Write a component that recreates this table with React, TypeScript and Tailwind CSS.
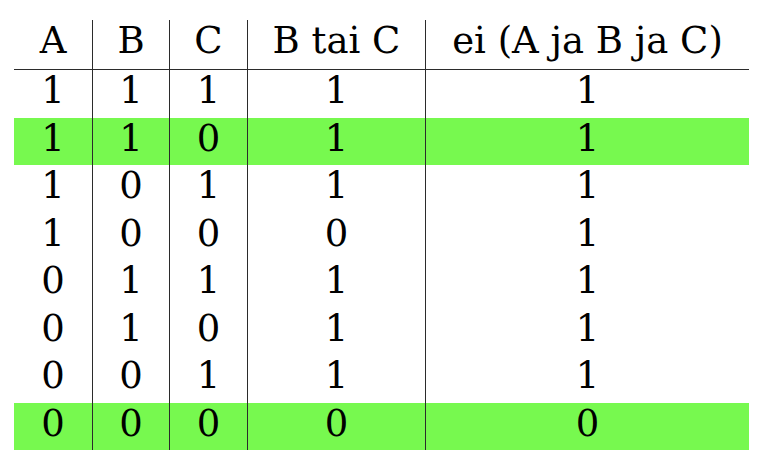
import React from "react";

const header = ["A", "B", "C", "B tai C", "ei (A ja B ja C)"];
const rows: { v: string[]; hl: boolean }[] = [
  { v: ["1", "1", "1", "1", "1"], hl: false },
  { v: ["1", "1", "0", "1", "1"], hl: true },
  { v: ["1", "0", "1", "1", "1"], hl: false },
  { v: ["1", "0", "0", "0", "1"], hl: false },
  { v: ["0", "1", "1", "1", "1"], hl: false },
  { v: ["0", "1", "0", "1", "1"], hl: false },
  { v: ["0", "0", "1", "1", "1"], hl: false },
  { v: ["0", "0", "0", "0", "0"], hl: true },
];

const widths = ["w-[78px]", "w-[77px]", "w-[78px]", "w-[178px]", "w-[324px]"];

function Cell({ text, i, h }: { text: string; i: number; h: string }) {
  return (
    <div
      className={`${widths[i]} ${h} flex justify-center items-start leading-[42px] font-['DejaVu_Serif'] ${
        i > 0 ? "border-l border-[#2b2b2b]" : ""
      }`}
    >
      {text}
    </div>
  );
}

export default function App() {
  return (
    <div className="w-[768px] h-[470px] bg-white pt-[20px] pl-[14px] text-[37px] text-black font-['DejaVu_Serif']">
      <div className="flex flex-col w-[735px]">
        <div className="flex border-b border-[#2b2b2b]">
          {header.map((t, i) => (
            <Cell key={i} text={t} i={i} h="h-[49px]" />
          ))}
        </div>
        {rows.map((r, ri) => (
          <div key={ri} className={`flex ${r.hl ? "bg-[#77f94f]" : ""}`}>
            {r.v.map((t, i) => (
              <Cell key={i} text={t} i={i} h="h-[47.5px]" />
            ))}
          </div>
        ))}
      </div>
    </div>
  );
}
